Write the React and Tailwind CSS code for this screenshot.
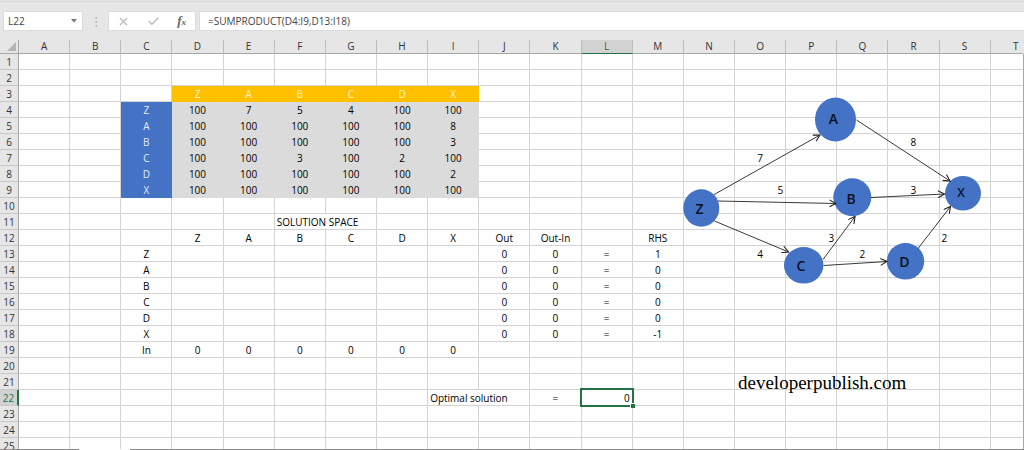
import { Check, X } from 'lucide-react'
import { clsx } from 'clsx'

const columns = 'ABCDEFGHIJKLMNOPQRST'.split('')
const rowNumbers = Array.from({ length: 25 }, (_, i) => i + 1)
const nodeNames = ['Z', 'A', 'B', 'C', 'D', 'X']

const SELECTED = 'L22'

const costs = [
    [100, 7, 5, 4, 100, 100],
    [100, 100, 100, 100, 100, 8],
    [100, 100, 100, 100, 100, 3],
    [100, 100, 3, 100, 2, 100],
    [100, 100, 100, 100, 100, 2],
    [100, 100, 100, 100, 100, 100],
]
const rhs = [1, 0, 0, 0, 0, -1]

const kinds = {
    plain: 'text-center border-[#d4d4d4]',
    left: 'text-left pl-[2px] border-[#d4d4d4]',
    right: 'text-right pr-[2px] border-[#d4d4d4]',
    yellow: 'text-center bg-[#ffc000] border-[#ffc000] text-[#fff2cc]',
    blue: 'text-center bg-[#4472c4] border-[#4472c4] text-[#e3ebf8]',
    gray: 'text-center bg-[#dbdbdb] border-[#dbdbdb]',
}

function buildCells() {
    const cells = {}
    const put = (ref, value, kind = 'plain', span = 1) => {
        cells[ref] = { value, kind, span }
    }

    nodeNames.forEach((name, i) => {
        const col = columns[i + 3]
        put(col + 3, name, 'yellow')
        put(col + 12, name)
        put(col + 19, 0)

        // cost matrix
        put('C' + (i + 4), name, 'blue')
        costs[i].forEach((cost, j) => put(columns[j + 3] + (i + 4), cost, 'gray'))

        // constraints
        put('C' + (i + 13), name)
        put('J' + (i + 13), 0)
        put('K' + (i + 13), 0)
        put('L' + (i + 13), '=')
        put('M' + (i + 13), rhs[i])
    })

    put('F11', 'SOLUTION SPACE', 'left', 2)
    put('J12', 'Out')
    put('K12', 'Out-In')
    put('M12', 'RHS')
    put('C19', 'In')
    put('I22', 'Optimal solution', 'left', 2)
    put('K22', '=')
    put('L22', 0, 'right')

    // edge weights
    put('O7', 7)
    put('R6', 8)
    put('O9', 5, 'right')
    put('R9', 3)
    put('P12', 3, 'right')
    put('S12', 2, 'left')
    put('O13', 4)
    put('Q13', 2)
    return cells
}

const cells = buildCells()

const nodes = [
    { name: 'A', cx: 835.5, cy: 119.5, rx: 20.5, ry: 22, tx: 833.5, ty: 124, size: 14 },
    { name: 'Z', cx: 701.3, cy: 208, rx: 18, ry: 18.7, tx: 699.5, ty: 214, size: 14 },
    { name: 'B', cx: 852.3, cy: 197.3, rx: 19, ry: 19, tx: 851, ty: 204, size: 14 },
    { name: 'X', cx: 963, cy: 193.3, rx: 18, ry: 17.3, tx: 961, ty: 197, size: 12 },
    { name: 'C', cx: 803.7, cy: 265.3, rx: 19.7, ry: 18.3, tx: 801, ty: 271, size: 14 },
    { name: 'D', cx: 905.5, cy: 261.3, rx: 18.7, ry: 18.3, tx: 904.5, ty: 267, size: 14 },
]

const edges = [
    [714, 194.6, 820, 135],
    [718, 201, 836, 203.5],
    [714.5, 221, 788.5, 252],
    [856.5, 120, 950, 181],
    [871, 197.5, 944.5, 194],
    [823, 259.5, 855, 216.5],
    [823.5, 265.5, 887, 261.5],
    [918, 248.5, 950.5, 206.5],
]

function FormulaBar() {
    return (
        <div className="flex gap-[3px] h-[30px] pl-[3px] pt-[9px] border-t border-[#d9d9d9] box-border shrink-0 text-[#444]">
            <div className="relative w-20 h-5 bg-white border border-[#dcdcdc] mr-[22px] shrink-0">
                <input
                    aria-label="Name box"
                    defaultValue={SELECTED}
                    className="block w-full h-full pl-1 pr-5 bg-transparent text-[10px] leading-4 outline-none"
                />
                <button aria-label="Show names" className="absolute right-1 top-[6px] p-[1px]">
                    <svg width="6" height="4" viewBox="0 0 6 4"><path d="M0 0h6L3 3.6z" fill="#777" /></svg>
                </button>
                <svg className="absolute left-[91px] top-[5px]" width="3" height="10" viewBox="0 0 3 10" fill="#ababab">
                    <path d="M0.5 0h1.5v1.5H0.5zM0.5 4h1.5v1.5H0.5zM0.5 8h1.5v1.5H0.5z" />
                </svg>
            </div>
            <div className="flex items-center justify-between w-[88px] h-5 px-2 bg-white border border-[#dcdcdc] shrink-0">
                <button aria-label="Cancel"><X size={13} strokeWidth={2.2} color="#bcbcbc" /></button>
                <button aria-label="Enter"><Check size={13} strokeWidth={2.6} color="#bcbcbc" /></button>
                <button aria-label="Insert function" className="font-['Liberation_Serif',serif] italic font-bold text-[13px] leading-4 pr-[1px] text-[#666]">
                    f<span className="text-[9px]">x</span>
                </button>
            </div>
            <input
                aria-label="Formula"
                defaultValue="=SUMPRODUCT(D4:I9,D13:I18)"
                className="flex-1 min-w-0 h-5 pl-2 bg-white border border-r-0 border-[#dcdcdc] text-[10px] leading-4 outline-none"
            />
        </div>
    )
}

function Cell({ id }) {
    const cell = cells[id]
    const selected = id === SELECTED
    return (
        <td
            colSpan={cell?.span ?? 1}
            className={clsx(
                'h-4 p-0 pt-[2px] border-r border-b leading-[13px] whitespace-nowrap',
                kinds[cell?.kind ?? 'plain'],
                selected && 'relative'
            )}
        >
            {cell?.value}
            {selected && (
                <>
                    <span className="absolute -inset-x-[2px] -top-[2px] -bottom-[2px] border-2 border-[#217346]" />
                    <span className="absolute -right-[3px] -bottom-[3px] w-[5px] h-[5px] bg-[#217346] border-t border-l border-white" />
                </>
            )}
        </td>
    )
}

function Sheet() {
    return (
        <table className="table-fixed border-separate border-spacing-0 w-[calc(100%+19px)] text-[10px] text-black">
            <thead>
                <tr className="text-[#333]">
                    <th className="w-[19px] h-[14px] p-0 border-b border-r border-[#a6a6a6]">
                        <svg className="ml-auto mr-[2px]" width="9" height="9" viewBox="0 0 9 9"><path d="M9 0v9H0z" fill="#b4b4b4" /></svg>
                    </th>
                    {columns.map((col) => (
                        <th
                            key={col}
                            scope="col"
                            className={clsx(
                                'h-[14px] p-0 border-r border-b border-r-[#bdbdbd] font-normal leading-[13px]',
                                col === 'L' ? 'bg-[#d2d2d2] border-b-[#217346] text-[#217346]' : 'border-b-[#a6a6a6]'
                            )}
                        >
                            {col}
                        </th>
                    ))}
                </tr>
            </thead>
            <tbody>
                {rowNumbers.map((row) => {
                    const ids = columns
                        .map((col) => col + row)
                        .filter((_, i) => !(i > 0 && cells[columns[i - 1] + row]?.span === 2))
                    return (
                        <tr key={row}>
                            <th
                                scope="row"
                                className={clsx(
                                    'h-4 p-0 pt-[2px] border-r border-b border-b-[#c8c8c8] font-normal leading-[13px]',
                                    row === 22
                                        ? 'bg-[#d2d2d2] border-r-2 border-r-[#217346] text-[#217346]'
                                        : 'bg-[#e6e6e6] border-r-[#a6a6a6] text-[#333]'
                                )}
                            >
                                {row}
                            </th>
                            {ids.map((id) => <Cell key={id} id={id} />)}
                        </tr>
                    )
                })}
            </tbody>
        </table>
    )
}

function Network() {
    return (
        <svg className="absolute left-[680px] top-[54px]" width="306" height="194" viewBox="680 94 306 194">
            <defs>
                <marker id="arrow" viewBox="0 0 8 8" refX="7" refY="4" markerWidth="8" markerHeight="8" markerUnits="userSpaceOnUse" orient="auto">
                    <path d="M0.5 0.5 7 4 0.5 7.5" fill="none" stroke="#222" strokeWidth="1.1" />
                </marker>
            </defs>
            {nodes.map((n) => (
                <g key={n.name}>
                    <ellipse cx={n.cx} cy={n.cy} rx={n.rx} ry={n.ry} fill="#4472c4" />
                    <text x={n.tx} y={n.ty} fontSize={n.size} textAnchor="middle" fill="#0a1222" className="font-semibold">
                        {n.name}
                    </text>
                </g>
            ))}
            {edges.map(([x1, y1, x2, y2]) => (
                <line key={`${x1}-${x2}`} x1={x1} y1={y1} x2={x2} y2={y2} stroke="#222" strokeWidth="0.9" markerEnd="url(#arrow)" />
            ))}
        </svg>
    )
}

export default function App() {
    return (
        <div className="h-screen flex flex-col overflow-hidden bg-[#e6e6e6] pt-[1px] font-['Open_Sans','Noto_Sans',sans-serif]">
            <FormulaBar />
            <main className="relative flex-1 min-h-0 mt-[9px] overflow-hidden">
                <div className="absolute inset-x-0 top-[14px] bottom-0 bg-white border-r border-[#a6a6a6]" />
                <div className="relative mr-[1px] h-full overflow-hidden">
                    <Sheet />
                    <Network />
                    <p className="absolute left-[738px] top-[331px] text-[19px] leading-6 text-black font-['Liberation_Serif',serif]">
                        developerpublish.com
                    </p>
                </div>
            </main>
            {/* top edge of the sheet tabs, open above the active one */}
            <footer className="flex h-px shrink-0 bg-[#8c8c8c]">
                <span className="ml-[79px] w-[51px] bg-white" />
            </footer>
        </div>
    )
}
